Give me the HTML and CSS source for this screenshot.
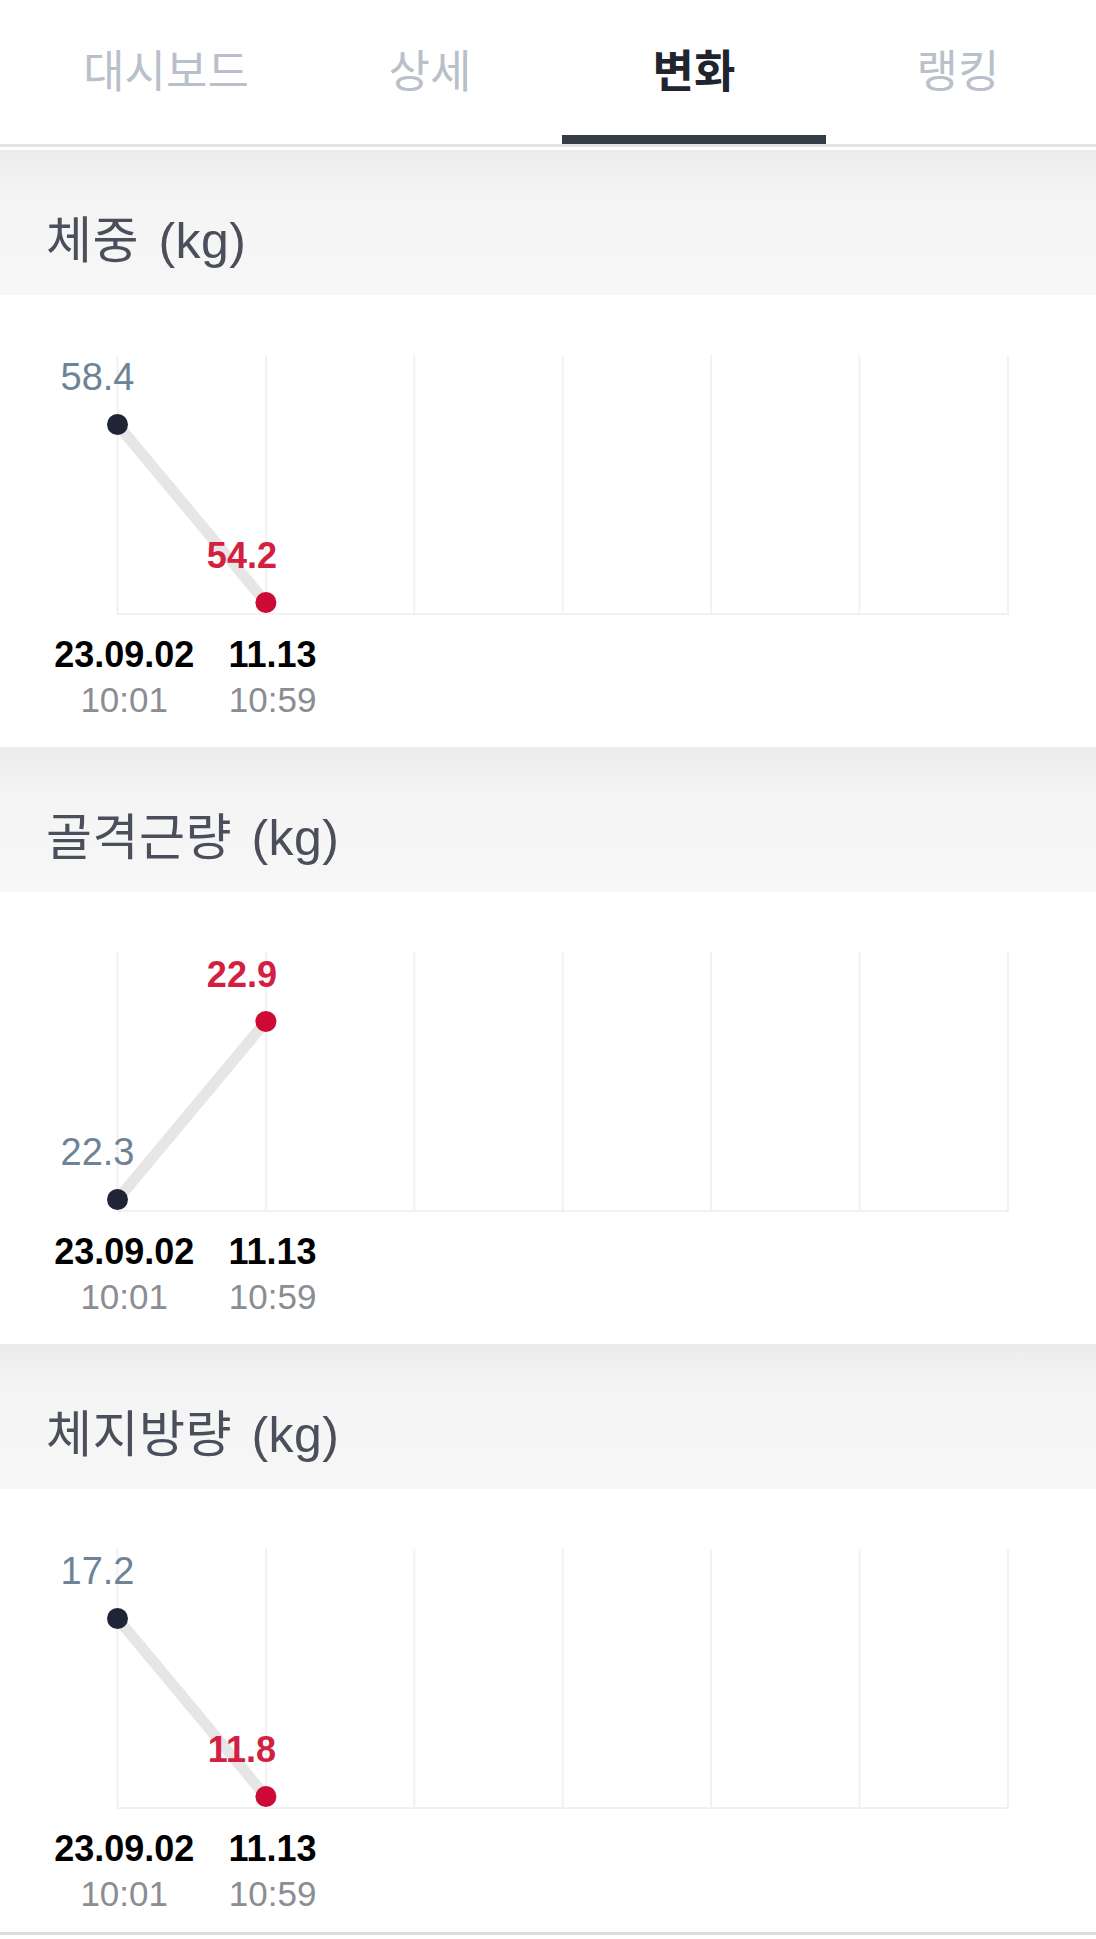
FILE: index.html
```html
<!DOCTYPE html>
<html lang="ko">
<head>
  <meta charset="UTF-8">
  <title>변화</title>
  <link rel="stylesheet" href="styles.css">
</head>
<body>

  <nav class="tabs">
    <a class="tab">대시보드</a>
    <a class="tab">상세</a>
    <a class="tab active">변화</a>
    <a class="tab">랭킹</a>
  </nav>

  <div class="list" id="list"></div>

  <script>
    const charts = [
      { title: "체중 (kg)", values: [58.4, 54.2] },
      { title: "골격근량 (kg)", values: [22.3, 22.9] },
      { title: "체지방량 (kg)", values: [17.2, 11.8] }
    ];

    const dates = [
      { date: "23.09.02", time: "10:01" },
      { date: "11.13", time: "10:59" }
    ];

    const gridLeft = 117.5;
    const gridStep = 148.4;
    const gridTop = 60;
    const gridBottom = 320;
    const yHigh = 129.5;
    const yLow = 307.5;

    function buildPlot(values) {
      const min = Math.min(...values);
      const max = Math.max(...values);
      const pts = values.map((v, i) => ({
        x: gridLeft + i * gridStep,
        y: max === min ? (yHigh + yLow) / 2 : yLow - (v - min) / (max - min) * (yLow - yHigh),
        v: v
      }));

      let svg = '<svg class="plot" width="1096" height="320" viewBox="0 0 1096 320">';
      for (let i = 0; i < 7; i++) {
        const x = gridLeft + i * gridStep;
        svg += `<line class="grid" x1="${x}" y1="${gridTop}" x2="${x}" y2="${gridBottom}"/>`;
      }
      svg += `<line class="grid" x1="${gridLeft}" y1="${gridBottom - 1}" x2="${gridLeft + 6 * gridStep}" y2="${gridBottom - 1}"/>`;

      const path = pts.map(p => `${p.x},${p.y}`).join(' ');
      svg += `<polyline class="trend" points="${path}"/>`;

      pts.forEach((p, i) => {
        const last = i === pts.length - 1;
        svg += `<circle class="${last ? 'dot dot-last' : 'dot'}" cx="${p.x}" cy="${p.y}" r="10.5"/>`;
        svg += `<text class="${last ? 'value value-last' : 'value'}" x="${p.x - (last ? 24 : 20)}" y="${p.y - 35}">${p.v.toFixed(1)}</text>`;
      });

      return svg + '</svg>';
    }

    function buildDates() {
      return '<div class="dates">' + dates.map(d =>
        `<div class="date"><b>${d.date}</b><span>${d.time}</span></div>`
      ).join('') + '</div>';
    }

    const list = document.getElementById('list');
    list.innerHTML = charts.map(c => `
      <section class="section">
        <h2 class="section-title">${c.title}</h2>
        <div class="chart">
          ${buildPlot(c.values)}
          ${buildDates()}
        </div>
      </section>
    `).join('');
  </script>

</body>
</html>
```

FILE: styles.css
```css
:root {
  --tab-muted: #b9c0c9;
  --tab-active: #20242e;
  --tab-bar: #343d45;
  --divider: #e2e3e7;
  --title-color: #4b4f5b;
  --value-color: #6e8396;
  --value-last: #d42040;
  --dot-color: #1f2436;
  --dot-last: #cc0a35;
}

body {
  margin: 0;
  background: #fff;
  font-family: "Liberation Sans", "Noto Sans CJK KR", sans-serif;
  color: #000;
}

.tabs {
  display: flex;
  padding-left: 34px;
  border-bottom: 3px solid var(--divider);
  margin-bottom: 3px;
}

.tab {
  width: 264px;
  height: 144px;
  box-sizing: border-box;
  padding-top: 10px;
  border-bottom: 9px solid transparent;
  text-align: center;
  font-size: 45px;
  line-height: 125px;
  color: var(--tab-muted);
}

.tab.active {
  color: var(--tab-active);
  font-weight: 700;
  border-bottom-color: var(--tab-bar);
}

.list {
  border-bottom: 3px solid #dcdde1;
}

.section-title {
  margin: 0;
  height: 145px;
  box-sizing: border-box;
  padding: 64px 0 0 46px;
  font-size: 50px;
  line-height: 54px;
  font-weight: 400;
  word-spacing: 5px;
  letter-spacing: 0.5px;
  color: var(--title-color);
  background: linear-gradient(to bottom, #ebebeb 0, #f4f4f4 40px, #f7f7f7 100%);
}

.chart {
  height: 452px;
  box-sizing: border-box;
  background: #fff;
}

.section:last-child .chart {
  height: 443px;
}

.plot {
  display: block;
}

.plot .grid {
  stroke: #f1f1f1;
  stroke-width: 2;
}

.plot .trend {
  fill: none;
  stroke: #e6e6e6;
  stroke-width: 11;
}

.plot .dot {
  fill: var(--dot-color);
}

.plot .dot-last {
  fill: var(--dot-last);
}

.plot .value {
  font-family: "Liberation Sans", sans-serif;
  font-size: 38px;
  text-anchor: middle;
  fill: var(--value-color);
}

.plot .value-last {
  font-size: 36px;
  font-weight: 700;
  fill: var(--value-last);
}

.dates {
  display: flex;
  padding-left: 50px;
  margin-top: 17px;
}

.date {
  width: 148.4px;
  display: flex;
  flex-direction: column;
  align-items: center;
  font-size: 35px;
  line-height: 45px;
}

.date b {
  font-size: 36px;
  color: #000;
}

.date span {
  color: #8a8d93;
}
```
